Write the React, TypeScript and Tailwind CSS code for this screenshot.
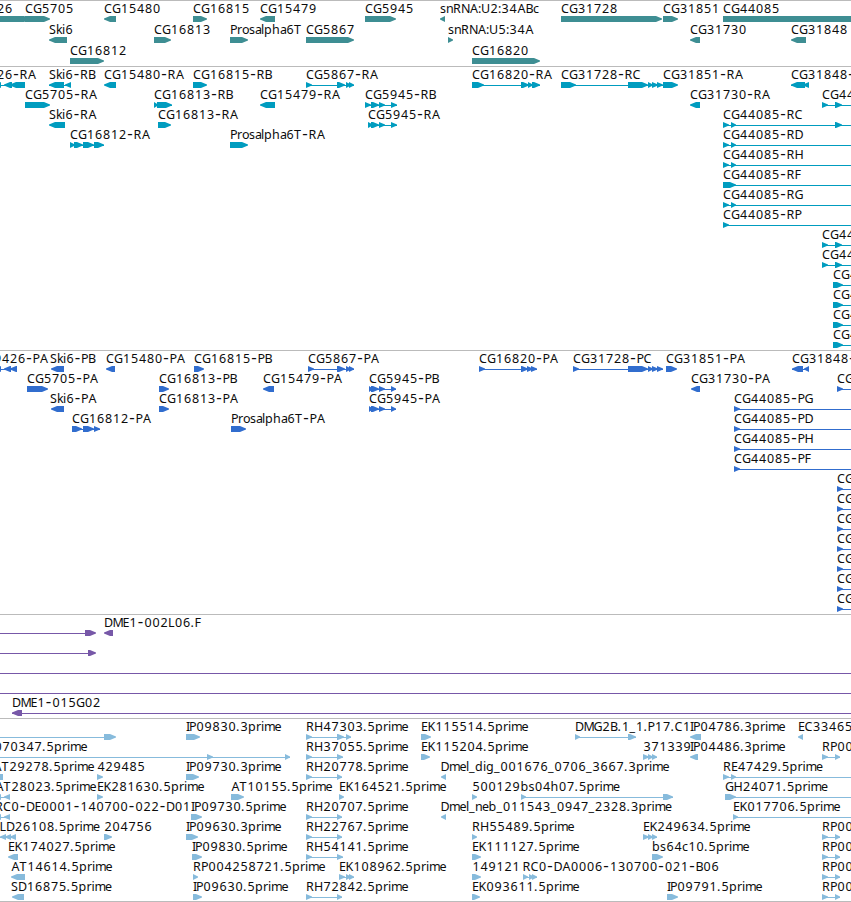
import React from "react";

type Span = [number, number];
type Feature = {
  x: number;
  label?: string;
  dir?: "r" | "l";
  parts: Span[];
  line?: Span;
};
type Lane = Feature[];

const EDGE = 860;

// Forward-strand, reverse-strand features; `to` extends the intron line.
const R = (label: string, x: number, parts: Span[], to?: number): Feature => ({
  x,
  label,
  dir: "r",
  parts,
  line: span(parts, to),
});
const L = (label: string, x: number, parts: Span[], to?: number): Feature => ({
  x,
  label,
  dir: "l",
  parts,
  line: span(parts, to),
});

function span(parts: Span[], to?: number): Span | undefined {
  if (to === undefined && parts.length < 2) return undefined;
  return [parts[0][0], to ?? parts[parts.length - 1][1]];
}

const genes: Lane[] = [
  [
    R("CG9426", -36, [[-60, 30]]),
    R("CG5705", 25, [[25, 50]]),
    L("CG15480", 104, [[104, 116]]),
    R("CG16815", 193, [[193, 207]]),
    L("CG15479", 260, [[260, 275]]),
    R("CG5945", 365, [[365, 396]]),
    L("snRNA:U2:34ABc", 440, [[440, 445]]),
    R("CG31728", 561, [[561, 662]]),
    R("CG31851", 663, [[663, 678]]),
    R("CG44085", 723, [[723, EDGE]]),
  ],
  [
    L("Ski6", 49, [[49, 67]]),
    R("CG16813", 154, [[154, 171]]),
    R("Prosalpha6T", 230, [[230, 248]]),
    R("CG5867", 306, [[306, 354]]),
    R("snRNA:U5:34A", 448, [[448, 453]]),
    L("CG31730", 690, [[690, 700]]),
    L("CG31848", 791, [[791, 806]]),
  ],
  [R("CG16812", 70, [[70, 104]]), R("CG16820", 472, [[472, 540]])],
];

const pair: Span[] = [[723, 729], [731, 736]];
const pairFar: Span[] = [[822, 828], [835, 842]];

const transcripts: Lane[] = [
  [
    L("CG9426-RA", -36, [[-5, 1], [4, 12], [10, 25]]),
    L("Ski6-RB", 49, [[49, 64], [65, 71]]),
    L("CG15480-RA", 104, [[104, 116]]),
    R("CG16815-RB", 193, [[193, 207]]),
    R("CG5867-RA", 306, [[306, 312], [337, 345], [346, 351], [349, 354]]),
    R("CG16820-RA", 472, [[472, 484], [521, 529], [528, 533], [532, 540]]),
    R("CG31728-RC", 561, [[561, 576], [628, 648], [648, 653], [652, 658], [657, 663]]),
    R("CG31851-RA", 663, [[663, 678]]),
    L("CG31848-RA", 791, [[791, 805], [803, 809]]),
  ],
  [
    R("CG5705-RA", 25, [[25, 50]]),
    R("CG16813-RB", 154, [[154, 158], [157, 172]]),
    L("CG15479-RA", 260, [[260, 275]]),
    R("CG5945-RB", 365, [[365, 371], [371, 379], [379, 385], [391, 397]]),
    L("CG31730-RA", 690, [[690, 700]]),
    R("CG44085-RI", 822, pairFar, EDGE),
  ],
  [
    L("Ski6-RA", 49, [[49, 65]]),
    R("CG16813-RA", 158, [[158, 171]]),
    R("CG5945-RA", 368, [[368, 373], [371, 379], [379, 385], [391, 397]]),
    R("CG44085-RC", 723, [...pair, [835, 842]], EDGE),
  ],
  [
    R("CG16812-RA", 70, [[70, 75], [74, 83], [83, 94], [94, 104]]),
    R("Prosalpha6T-RA", 230, [[230, 248]]),
    R("CG44085-RD", 723, pair, EDGE),
  ],
  [R("CG44085-RH", 723, pair, EDGE)],
  [R("CG44085-RF", 723, [[723, 736]], EDGE)],
  [R("CG44085-RG", 723, pair, EDGE)],
  [R("CG44085-RP", 723, [[723, 729]], EDGE)],
  [R("CG44085-RJ", 822, pairFar, EDGE)],
  [R("CG44085-RK", 822, pairFar, EDGE)],
  [R("CG44085-RL", 833, [[833, 843]], EDGE)],
  [R("CG44085-RM", 833, [[833, 843]], EDGE)],
  [R("CG44085-RN", 833, [[833, 843]], EDGE)],
  [R("CG44085-RO", 833, [[833, 843]], EDGE)],
];

const short = (name: string): Feature => R(name, 837, [[837, 843]], EDGE);

const proteins: Lane[] = [
  [
    L("CG9426-PA", -23, [[-5, 1], [4, 11], [10, 17]]),
    L("Ski6-PB", 50, [[51, 64]]),
    L("CG15480-PA", 106, [[106, 115]]),
    R("CG16815-PB", 194, [[194, 204]]),
    R("CG5867-PA", 308, [[308, 314], [337, 345], [346, 351], [349, 354]]),
    R("CG16820-PA", 479, [[479, 485], [521, 528], [527, 533], [531, 537]]),
    R("CG31728-PC", 573, [[573, 579], [628, 648], [648, 653], [652, 658], [657, 663]]),
    R("CG31851-PA", 666, [[666, 677]]),
    L("CG31848-PA", 792, [[792, 803], [804, 809]]),
  ],
  [
    R("CG5705-PA", 27, [[27, 48]]),
    R("CG16813-PB", 159, [[159, 169]]),
    L("CG15479-PA", 263, [[263, 274]]),
    R("CG5945-PB", 369, [[369, 373], [371, 379], [379, 385], [391, 396]]),
    L("CG31730-PA", 691, [[691, 700]]),
    short("CG44085-PI"),
  ],
  [
    L("Ski6-PA", 50, [[51, 64]]),
    R("CG16813-PA", 159, [[159, 169]]),
    R("CG5945-PA", 369, [[369, 373], [371, 379], [379, 385], [391, 396]]),
    R("CG44085-PG", 734, [[734, 740]], EDGE),
  ],
  [
    R("CG16812-PA", 72, [[72, 82], [83, 94], [94, 100]]),
    R("Prosalpha6T-PA", 231, [[231, 246]]),
    R("CG44085-PD", 734, [[734, 740]], EDGE),
  ],
  [R("CG44085-PH", 734, [[734, 740]], EDGE)],
  [R("CG44085-PF", 734, [[734, 740]], EDGE)],
  [short("CG44085-PJ")],
  [short("CG44085-PK")],
  [short("CG44085-PL")],
  [short("CG44085-PM")],
  [short("CG44085-PN")],
  [short("CG44085-PO")],
  [short("CG44085-PP")],
];

const bacs: Lane[] = [
  [
    { x: 0, dir: "r", parts: [[85, 96]], line: [-5, 90] },
    L("DME1-002L06.F", 104, [[104, 113]]),
  ],
  [{ x: 0, dir: "r", parts: [[88, 96]], line: [-5, 90] }],
  [{ x: 0, parts: [], line: [-5, EDGE] }],
  [{ x: 0, parts: [], line: [-5, EDGE] }],
  [L("DME1-015G02", 12, [[12, 22]], EDGE)],
];

const rh = (label: string, end = 342): Feature => R(label, 306, [[306, 312], [337, end]]);
const rp = (label: string): Feature => R(label, 822, [[822, 828], [835, 840]]);

const ests: Lane[] = [
  [
    { x: 0, dir: "r", parts: [[104, 116]], line: [-5, 106] },
    R("IP09830.3prime", 186, [[186, 200]]),
    R("RH47303.5prime", 306, [[306, 312], [337, 344], [346, 351]]),
    R("EK115514.5prime", 421, [[421, 431]]),
    R("DMG2B.1_1.P17.C1", 575, [[575, 580], [628, 636]]),
    L("IP04786.3prime", 690, [[690, 701]]),
    L("EC334650.5prime", 798, [[798, 803]]),
  ],
  [
    { x: -6, label: "070347.5prime", dir: "r", parts: [[207, 213], [285, 290]], line: [-5, 290] },
    rh("RH37055.5prime", 343),
    R("EK115204.5prime", 421, [[421, 430]]),
    R("371339", 643, [[643, 649], [648, 653], [652, 657]]),
    L("IP04486.3prime", 690, [[690, 698]]),
    rp("RP001442.5prime"),
  ],
  [
    L("AT29278.5prime", -7, [[-8, 3]]),
    R("429485", 97, [[97, 103]]),
    R("IP09730.3prime", 186, [[186, 199]]),
    rh("RH20778.5prime"),
    L("Dmel_dig_001676_0706_3667.3prime", 440.5, [[441, 446]]),
    R("RE47429.5prime", 723, pair, EDGE),
  ],
  [
    L("AT28023.5prime", -5, [[-5, 1], [4, 10]]),
    R("EK281630.5prime", 97, [[97, 103]]),
    R("AT10155.5prime", 231, [[231, 244]]),
    R("EK164521.5prime", 339, [[339, 344]]),
    R("500129", 472, [[472, 477]]),
    R("bs04h07.5prime", 520.5, [[521, 526], [663, 673]]),
    R("GH24071.5prime", 725, [[725, 736]], EDGE),
  ],
  [
    L("RC0-DE0001-140700-022-D01", -5, [[-5, 1], [4, 10]]),
    R("IP09730.5prime", 191, [[191, 202]]),
    rh("RH20707.5prime"),
    L("Dmel_neb_011543_0947_2328.3prime", 440.5, [[441, 446]]),
    R("EK017706.5prime", 733, [[733, 738]], EDGE),
  ],
  [
    L("LD26108.5prime", -0.5, [[0, 6], [5, 11], [10, 16]]),
    R("204756", 104, [[104, 112]]),
    R("IP09630.3prime", 186, [[186, 198]]),
    rh("RH22767.5prime"),
    R("RH55489.5prime", 472, [[472, 477]]),
    R("EK249634.5prime", 643, [[643, 649], [648, 653], [652, 657]]),
    rp("RP002185.5prime"),
  ],
  [
    L("EK174027.5prime", 8, [[8, 18]]),
    R("IP09830.5prime", 192, [[192, 202]]),
    rh("RH54141.5prime", 343),
    R("EK111127.5prime", 472, [[472, 481]]),
    R("bs64c10.5prime", 652, [[652, 663]]),
    rp("RP003319.5prime"),
  ],
  [
    L("AT14614.5prime", 11, [[11, 25]]),
    R("RP004258721.5prime", 193, [[193, 198]]),
    R("EK108962.5prime", 339, [[339, 345], [346, 351], [349, 354]]),
    R("149121", 472, [[472, 481]]),
    R("RC0-DA0006-130700-021-B06", 522.5, [[523, 528], [529, 534], [532, 537]]),
    rp("RP004402.5prime"),
  ],
  [
    L("SD16875.5prime", 11, [[12, 24]]),
    R("IP09630.5prime", 193, [[193, 202]]),
    rh("RH72842.5prime"),
    R("EK093611.5prime", 472, [[472, 480]]),
    R("IP09791.5prime", 667, [[667, 678]]),
    rp("RP005127.5prime"),
  ],
];

// Pixel advances of the label face; anything missing is a full 8px cell.
const ADVANCE: Record<string, number> = {
  "-": 7, ".": 4, ":": 3, _: 6,
  A: 8.5, B: 7.5, D: 8.5, E: 6.5, F: 6.5, G: 8.5, H: 9, I: 3, K: 7.5, L: 6.5, M: 10,
  N: 8.5, P: 7, R: 8, S: 7, T: 7.5, U: 9,
  a: 6, c: 6, e: 6.5, i: 3, k: 6, l: 3, m: 10.5, n: 7, o: 7, r: 5, s: 6,
};

function Label({ text, x }: { text: string; x: number }) {
  let at = x;
  const xs = [...text].map((ch) => {
    const here = at + (/[0-9]/.test(ch) ? 0.5 : ch === "-" ? 0.8 : ch === "A" ? 0.6 : 0);
    at += ADVANCE[ch] ?? 8;
    return here.toFixed(1);
  });
  return (
    <text
      x={xs.join(" ")}
      y={10}
      className="fill-[#0c0c0c] text-[12.5px] font-['Noto_Sans','Open_Sans',sans-serif] [font-kerning:none] [font-variant-ligatures:none]"
    >
      {text.split(/(-)/).map((t, i) =>
        t === "-" ? (
          <tspan key={i} className="text-[17px]">
            -
          </tspan>
        ) : (
          t
        ),
      )}
    </text>
  );
}

function arrow([a, b]: Span, dir: "r" | "l" | undefined) {
  const h = Math.min(b - a, 6);
  return dir === "l"
    ? `${b},13 ${a + h},13 ${a},15.6 ${a},16.4 ${a + h},19 ${b},19`
    : `${a},13 ${b - h},13 ${b},15.6 ${b},16.4 ${b - h},19 ${a},19`;
}

function Track({ lanes, className, laneClass }: { lanes: Lane[]; className: string; laneClass: string }) {
  return (
    <section className={`border-t border-[#bbbbbb] pt-[2px] ${className}`}>
      {lanes.map((lane, i) => (
        <svg key={i} className={`block w-full overflow-visible ${laneClass}`}>
          {lane.map((f, j) => (
            <g key={j} fill="currentColor">
              {f.line && (
                <rect x={f.line[0]} y={16} width={f.line[1] - f.line[0]} height={1} shapeRendering="crispEdges" />
              )}
              {f.parts.map((p, k) => (
                <polygon key={k} points={arrow(p, f.dir)} />
              ))}
              {f.label && <Label text={f.label} x={f.x} />}
            </g>
          ))}
        </svg>
      ))}
    </section>
  );
}

export default function App() {
  return (
    <main className="flex h-[902px] w-[851px] flex-col overflow-hidden bg-white">
      <Track lanes={genes} className="h-[66px] text-[#3e8e93]" laneClass="h-[21px]" />
      <Track lanes={transcripts} className="h-[284px] text-[#009cbf]" laneClass="h-5" />
      <Track lanes={proteins} className="h-[264px] text-[#316dce]" laneClass="h-5" />
      <Track lanes={bacs} className="h-[104px] text-[#7758a8]" laneClass="h-5" />
      <Track lanes={ests} className="h-[184px] border-b text-[#87bbdc]" laneClass="h-5" />
    </main>
  );
}
